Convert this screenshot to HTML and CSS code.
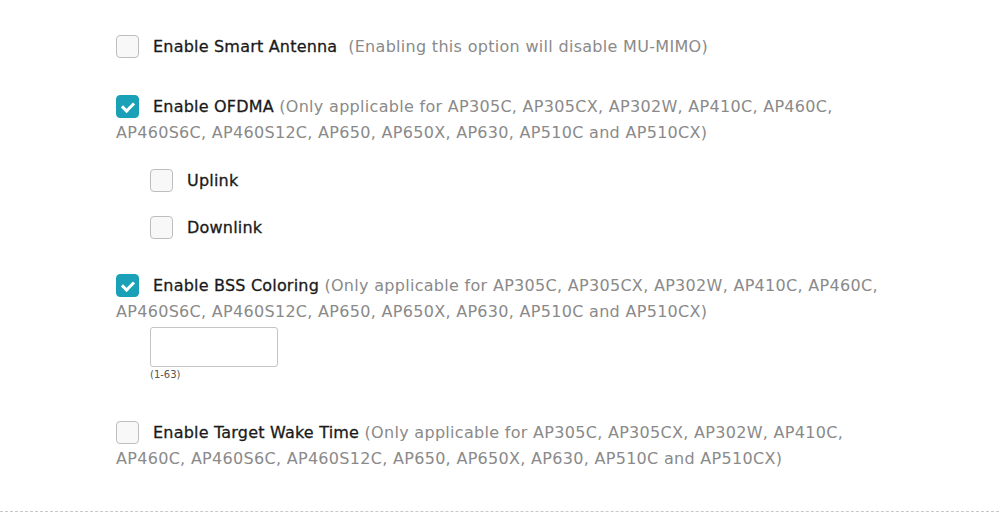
FILE: index.html
```html
<!DOCTYPE html>
<html>
<head>
<meta charset="utf-8">
<title>Radio settings</title>
<link rel="stylesheet" href="styles.css">
</head>
<body>

<div class="options">

  <p class="option"><span class="check"></span><b class="label">Enable Smart Antenna</b>&nbsp; (Enabling this option will disable MU-MIMO)</p>

  <p class="option"><span class="check checked"></span><b class="label">Enable OFDMA</b> (Only applicable for AP305C, AP305CX, AP302W, AP410C, AP460C, AP460S6C, AP460S12C, AP650, AP650X, AP630, AP510C and AP510CX)</p>

  <div class="sub">
    <p class="option sub-option"><span class="check"></span><b class="label">Uplink</b></p>
    <p class="option sub-option"><span class="check"></span><b class="label">Downlink</b></p>
  </div>

  <p class="option"><span class="check checked"></span><b class="label">Enable BSS Coloring</b> (Only applicable for AP305C, AP305CX, AP302W, AP410C, AP460C, AP460S6C, AP460S12C, AP650, AP650X, AP630, AP510C and AP510CX)</p>

  <div class="field">
    <input type="text" class="textbox">
    <div class="range">(1-63)</div>
  </div>

  <p class="option"><span class="check"></span><b class="label">Enable Target Wake Time</b> (Only applicable for AP305C, AP305CX, AP302W, AP410C, AP460C, AP460S6C, AP460S12C, AP650, AP650X, AP630, AP510C and AP510CX)</p>

</div>

<div class="divider"></div>

</body>
</html>
```

FILE: styles.css
```css
body {
    margin: 0;
    background: #fff;
    font-family: "DejaVu Sans", sans-serif;
    font-size: 16px;
    color: #222;
}

.options {
    width: 770px;
    padding: 34px 0 0 116px;
}

.option {
    margin: 0 0 34px 0;
    line-height: 26px;
    color: #8a8a8a;
    letter-spacing: 0.3px;
}

.check {
    display: inline-block;
    box-sizing: border-box;
    width: 23px;
    height: 23px;
    border: 1px solid #bdbdbd;
    border-radius: 4px;
    background: #f8f8f8;
    vertical-align: -6px;
    margin-right: 14px;
    position: relative;
}

.check.checked {
    background: #1aa1b8;
    border-color: #1aa1b8;
}

/* tick mark */
.check.checked::after {
    content: "";
    position: absolute;
    left: 7px;
    top: 4px;
    width: 5px;
    height: 9px;
    border: solid #fff;
    border-width: 0 3px 3px 0;
    transform: rotate(45deg);
}

.label {
    font-weight: normal;
    color: #1a1a1a;
    -webkit-text-stroke: 0.3px #1a1a1a;
    letter-spacing: 0.2px;
}

.sub {
    padding-left: 34px;
    margin-top: -12px;
    margin-bottom: 32px;
}

.sub-option {
    margin-bottom: 21px;
}

.field {
    padding-left: 34px;
    margin-top: -32px;
    margin-bottom: 40px;
}

.textbox {
    display: block;
    box-sizing: border-box;
    width: 128px;
    height: 40px;
    border: 1px solid #c4c4c4;
    border-radius: 3px;
    margin: 0;
}

.range {
    font-size: 10px;
    color: #555;
    margin-top: 2px;
}

/* margin collapses with the last option's bottom margin */
.divider {
    border-top: 1px dashed #c8c8c8;
    margin-top: 39px;
}
```
